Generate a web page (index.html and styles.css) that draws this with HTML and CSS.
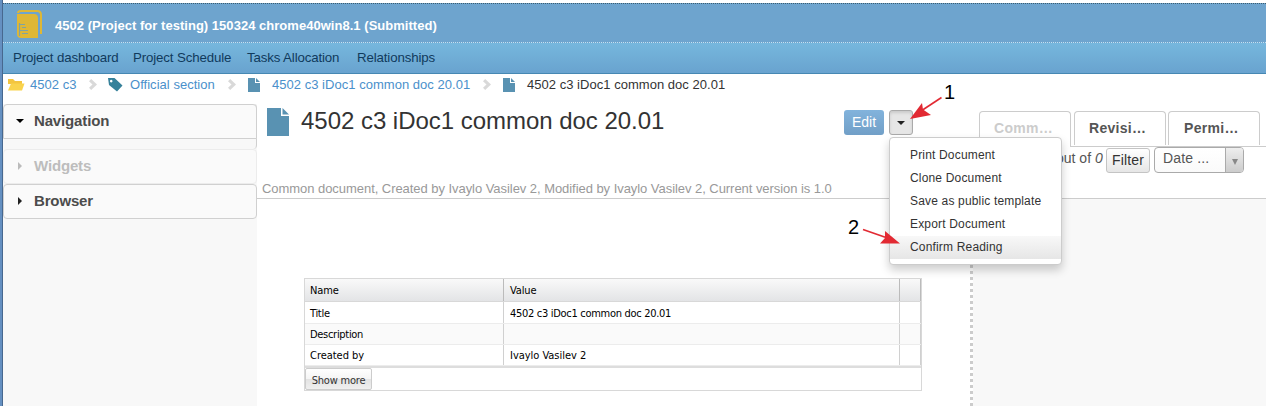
FILE: index.html
```html
<!DOCTYPE html>
<html lang="en">
<head>
<meta charset="utf-8">
<title>4502 c3 iDoc1 common doc 20.01</title>
<link rel="stylesheet" href="styles.css">
</head>
<body>
<svg class="defs" width="0" height="0">
  <symbol id="doc" viewBox="0 0 22 28"><path d="M0 0H14V8H22V28H0Z"/><path d="M15.500 0L22 6.500H15.500Z"/></symbol>
  <symbol id="chev" viewBox="0 0 8 11"><path d="M2.200 0L8 5.500L2.200 11L0 8.800L3.500 5.500L0 2.200Z"/></symbol>
</svg>
<div class="app">
  <header class="project">
    <svg class="project-icon" width="25" height="28" viewBox="0 0 25 28">
      <path d="M1 3Q1 1 4 1H20Q24 1 24 5V24" fill="none" stroke="#dfb735" stroke-width="2"/>
      <path d="M0 4H17Q21 4 21 8V28H4Q0 28 0 24Z" fill="#dfb735"/>
      <path d="M2.500 13V26M3 14.500H8M5 17.500H9M3 20.500H11M5 23.500H11" stroke="#7fa3a4" stroke-width="1.200" fill="none"/>
    </svg>
    <span class="project-title">4502 (Project for testing) 150324 chrome40win8.1 (Submitted)</span>
  </header>
  <nav class="menu-bar">
    <a class="mb1">Project dashboard</a><a class="mb2">Project Schedule</a><a class="mb3">Tasks Allocation</a><a>Relationships</a>
  </nav>
  <nav class="crumbs">
    <svg class="folder" width="17" height="13" viewBox="0 0 17 13"><path d="M0 12V1H5L7 3H14V6H0Z" fill="#f3c540"/><path d="M3 5.500H16.500L14 12.500H0Z" fill="#f9d34d"/></svg>
    <a class="c1">4502 c3</a>
    <svg class="chev" width="8" height="11"><use href="#chev"/></svg>
    <svg class="tag" width="15" height="14" viewBox="0 0 15 14"><path fill-rule="evenodd" d="M0 0H6.500L14.500 7.500L9 13.500L1 7Z M3.200 1.800A1.300 1.300 0 1 0 3.210 1.800Z" fill="#36819a"/></svg>
    <a class="c2">Official section</a>
    <svg class="chev" width="8" height="11"><use href="#chev"/></svg>
    <svg class="doc-small" width="12" height="14" viewBox="0 0 12 14"><path d="M0 0H7V5H12V14H0Z"/><path d="M8 0L12 4H8Z"/></svg>
    <a class="c3">4502 c3 iDoc1 common doc 20.01</a>
    <svg class="chev" width="8" height="11"><use href="#chev"/></svg>
    <svg class="doc-small" width="12" height="14" viewBox="0 0 12 14"><path d="M0 0H7V5H12V14H0Z"/><path d="M8 0L12 4H8Z"/></svg>
    <span class="c4">4502 c3 iDoc1 common doc 20.01</span>
  </nav>
  <div class="columns">
    <aside class="sidebar">
      <section class="nav-box">
        <h3 class="acc open"><i class="tri down"></i>Navigation</h3>
      </section>
      <h3 class="acc off"><i class="tri"></i>Widgets</h3>
      <h3 class="acc"><i class="tri"></i>Browser</h3>
    </aside>
    <main class="content">
      <div class="doc-head">
        <div class="title-row">
          <svg class="doc-big" width="22" height="28"><use href="#doc"/></svg>
          <h1>4502 c3 iDoc1 common doc 20.01</h1>
          <button class="edit">Edit</button>
          <div class="more">
            <button class="toggle"><i class="caret"></i></button>
            <ul class="dropdown">
              <li>Print Document</li>
              <li>Clone Document</li>
              <li>Save as public template</li>
              <li>Export Document</li>
              <li class="active">Confirm Reading</li>
            </ul>
          </div>
        </div>
        <p class="meta">Common document, Created by Ivaylo Vasilev 2, Modified by Ivaylo Vasilev 2, Current version is 1.0</p>
      </div>
      <div class="grid">
        <div class="row head"><span>Name</span><span>Value</span><span></span></div>
        <div class="row"><span>Title</span><span>4502 c3 iDoc1 common doc 20.01</span><span></span></div>
        <div class="row alt"><span>Description</span><span></span><span></span></div>
        <div class="row last"><span>Created by</span><span>Ivaylo Vasilev 2</span><span></span></div>
        <div class="grid-foot"><button class="show-more">Show more</button></div>
      </div>
    </main>
    <aside class="side-panel">
      <div class="panel-top">
        <div class="tabs"><span class="tab current">Comm…</span><span class="tab">Revisi…</span><span class="tab">Permi…</span></div>
        <div class="filters">
          <span class="count">out of <em>0</em></span>
          <button class="filter">Filter</button>
          <div class="select"><span>Date ...</span><b><i></i></b></div>
        </div>
      </div>
      <div class="panel-body"></div>
    </aside>
  </div>
  <svg class="notes" width="140" height="180" viewBox="0 0 140 180">
    <g fill="#e22a33" stroke="#e22a33">
      <path d="M102.500 12.500L82 26" stroke-width="1.600"/>
      <path d="M71 34L83 18L84 24.500L92 30Z" stroke="none"/>
      <path d="M24 144.500L47 152.500" stroke-width="1.600"/>
      <path d="M61 158.500L41 158.500L46 153L46 146Z" stroke="none"/>
    </g>
    <text x="105" y="14">1</text><text x="9" y="149">2</text>
  </svg>
</div>
</body>
</html>
```
FILE: styles.css
```css
* { box-sizing: border-box; }
body { margin: 0; background: #fff; font-family: "Liberation Sans", Arial, sans-serif; font-size: 13px; overflow: hidden; }
.defs { position: absolute; }
.app { position: relative; height: 406px; padding-top: 3px; border-left: 2px solid #6590c1; box-shadow: inset 1px 0 #47688f; padding-left: 1px; display: flex; flex-direction: column; }
button { font-family: inherit; padding: 0; margin: 0; }
h1, h3, p, ul { margin: 0; padding: 0; font-weight: normal; }
svg { flex: none; display: block; }
span, a, h1, p, li { white-space: nowrap; }

.project { height: 40px; flex: none; background: #6ea4ce; border-top: 1px dotted #3b5d70; border-bottom: 1px dotted #c5e0f0; display: flex; padding-left: 14px; }
.project-icon { margin-top: 6px; }
.project-title { margin-left: 13px; color: #fff; font-weight: bold; font-size: 13px; line-height: 43px; letter-spacing: .03px; }
.menu-bar { height: 31px; flex: none; display: flex; padding-left: 10px; background: linear-gradient(#76b7dd, #69a3cf); border-bottom: 1px solid #4688b3; line-height: 29px; color: #103a5c; font-size: 13.3px; letter-spacing: -.14px; }
.mb1 { width: 120px; } .mb2 { width: 114px; } .mb3 { width: 110px; }

.crumbs { height: 30px; flex: none; display: flex; color: #4a90cb; line-height: 22px; padding-left: 5px; letter-spacing: .03px; }
.folder { margin-top: 4px; }
.c1 { width: 58px; margin-left: 5px; }
.chev { margin: 5px 0 0 1px; fill: #d9d9d9; }
.tag { margin: 4px 0 0 11px; }
.c2 { width: 97px; margin-left: 7px; }
.doc-small { margin: 4px 0 0 12px; fill: #5992b2; }
.c3 { width: 210px; margin-left: 12px; }
.c4 { margin-left: 12px; color: #333; }

.columns { flex: 1; display: flex; min-height: 0; }
.sidebar { width: 254px; flex: none; background: #f8f8f8; }
.acc { height: 35px; border: 1px solid #d0d0d0; border-radius: 4px; background: #fafafa; color: #4c4c4c; font-size: 15px; font-weight: bold; line-height: 31px; display: flex; align-items: center; padding: 0 0 2px 14px; letter-spacing: -.15px; }
.acc.off { color: #bdbdbd; border-color: #ececec; }
.nav-box { height: 45px; border: solid #d0d0d0; border-width: 0 1px 0 0; border-radius: 4px; }
.nav-box .acc { border-radius: 4px 4px 0 0; margin-right: -1px; }
.tri { border: 4px solid transparent; border-left-color: #222; border-right-width: 0; height: 8px; flex: none; width: 4px; margin: 1px 12px 0 0; }
.off .tri { border-left-color: #bbb; }
.tri.down { border: 4px solid transparent; border-top-color: #000; border-bottom: 0; width: 8px; height: 4px; margin: 0 10px 0 -2px; }

.content { width: 713px; flex: none; }
.doc-head { height: 95px; border-bottom: 1px solid #ccc; }
.title-row { display: flex; height: 74px; padding-left: 10px; }
.doc-big { fill: #5992b2; margin-top: 4px; }
h1 { width: 543px; margin-left: 12px; font-size: 24px; line-height: 34px; color: #333; letter-spacing: -.03px; }
.edit { width: 40px; height: 25px; margin-top: 6px; border: 0; border-radius: 3px; background: linear-gradient(#82b3dc, #719fc7); color: #fff; font-size: 14px; padding-bottom: 1px; }
.more { position: relative; margin: 6px 0 0 5px; }
.toggle { display: flex; align-items: center; justify-content: center; width: 24px; height: 25px; border: 1px solid #aaa; border-radius: 3px; background: #e6e6e6; box-shadow: inset 0 2px 3px rgba(0,0,0,.12); }
.caret { border: 4px solid transparent; border-top-color: #222; border-bottom: 0; }
.dropdown { position: absolute; z-index: 3; left: 0; top: 27px; width: 173px; height: 128px; padding: 6px 0; list-style: none; background: #fff; border: 1px solid #ccc; border-radius: 4px; box-shadow: 0 5px 10px rgba(0,0,0,.2); font-size: 12px; color: #333; letter-spacing: .17px; }
.dropdown li { height: 23px; line-height: 22px; padding-left: 20px; }
.dropdown .active { background: linear-gradient(#f8f8f8, #e6e6e6); }
.meta { padding-left: 5px; line-height: 21px; color: #999; font-size: 13px; letter-spacing: -.05px; }

.grid { width: 618px; height: 113px; margin: 79px 0 0 47px; border: 1px solid #d8d8d8; font-family: "DejaVu Sans Condensed", "DejaVu Sans", sans-serif; font-stretch: condensed; font-size: 11px; color: #000; }
.row { display: grid; grid-template-columns: 199px 396px 21px; height: 21px; border-bottom: 1px solid #ececec; line-height: 22px; letter-spacing: -.3px; }
.row.last { letter-spacing: -.03px; }
.row span { padding-left: 5px; border-right: 1px solid #d0d0d0; height: 20px; }
.row span + span { padding-left: 6px; }
.head { height: 23px; line-height: 24px; background: linear-gradient(#f9f9f9, #e3e4e6); border-color: #d8d8d8; letter-spacing: -.15px; }
.row.head span { border-color: #bbb; height: 22px; }
.head + .row { height: 22px; line-height: 23px; }
.head + .row span { height: 21px; }
.alt { background: #fafafa; }
.grid-foot { border-top: 2px solid #ddd; }
.show-more { display: block; width: 67px; height: 22px; border: 1px solid #ccc; border-radius: 2px; background: linear-gradient(#fff 0%, #f5f5f5 48%, #e3e3e3 52%, #efefef 100%); font-size: 11px; color: #333; padding-top: 2px; letter-spacing: -.2px; }

.side-panel { flex: 1; min-width: 0; display: flex; flex-direction: column; }
.panel-top { height: 95px; border-bottom: 1px solid #ccc; padding-top: 7px; }
.panel-body { flex: 1; background: repeating-linear-gradient(#ccc 0 3px, #fff 3px 6px) 0 0 / 3px 100% no-repeat #f8f8f8; }
.tabs { height: 36px; display: flex; gap: 2px; padding-left: 9px; border-bottom: 1px solid #ccc; }
.tab { width: 92px; height: 34px; border: 1px solid #ccc; border-bottom: 0; border-radius: 4px 4px 0 0; font-size: 14px; font-weight: bold; line-height: 33px; color: #555; padding-left: 14px; letter-spacing: .3px; }
.tab + .tab { margin-left: 1px; }
.tab + .tab + .tab { margin-left: 0; padding-left: 15px; }
.tab.current { height: 36px; background: #fff; color: #ccc; }
.filters { display: flex; padding: 1px 0 0 86px; color: #555; font-size: 14px; }
.count { width: 50px; line-height: 20px; }
.filter { width: 44px; height: 25px; border: 1px solid #c4c4c4; border-radius: 3px; background: linear-gradient(#fff, #e6e6e6); color: #333; font-size: 14px; padding-bottom: 2px; letter-spacing: .15px; }
.select { width: 90px; height: 26px; margin: -1px 0 0 4px; border: 1px solid #aaa; border-radius: 4px; display: flex; justify-content: space-between; line-height: 21px; padding-left: 8px; overflow: hidden; background: linear-gradient(#fff, #fafafa); letter-spacing: .15px; }
.select b { width: 18px; border-left: 1px solid #aaa; background: linear-gradient(#eee, #ccc); display: flex; align-items: center; justify-content: center; padding-top: 4px; }
.select i { border: 3px solid transparent; border-top: 6px solid #888; border-bottom: 0; }
.notes { position: absolute; z-index: 5; left: 837px; top: 85px; font-size: 20px; overflow: visible; }
```
